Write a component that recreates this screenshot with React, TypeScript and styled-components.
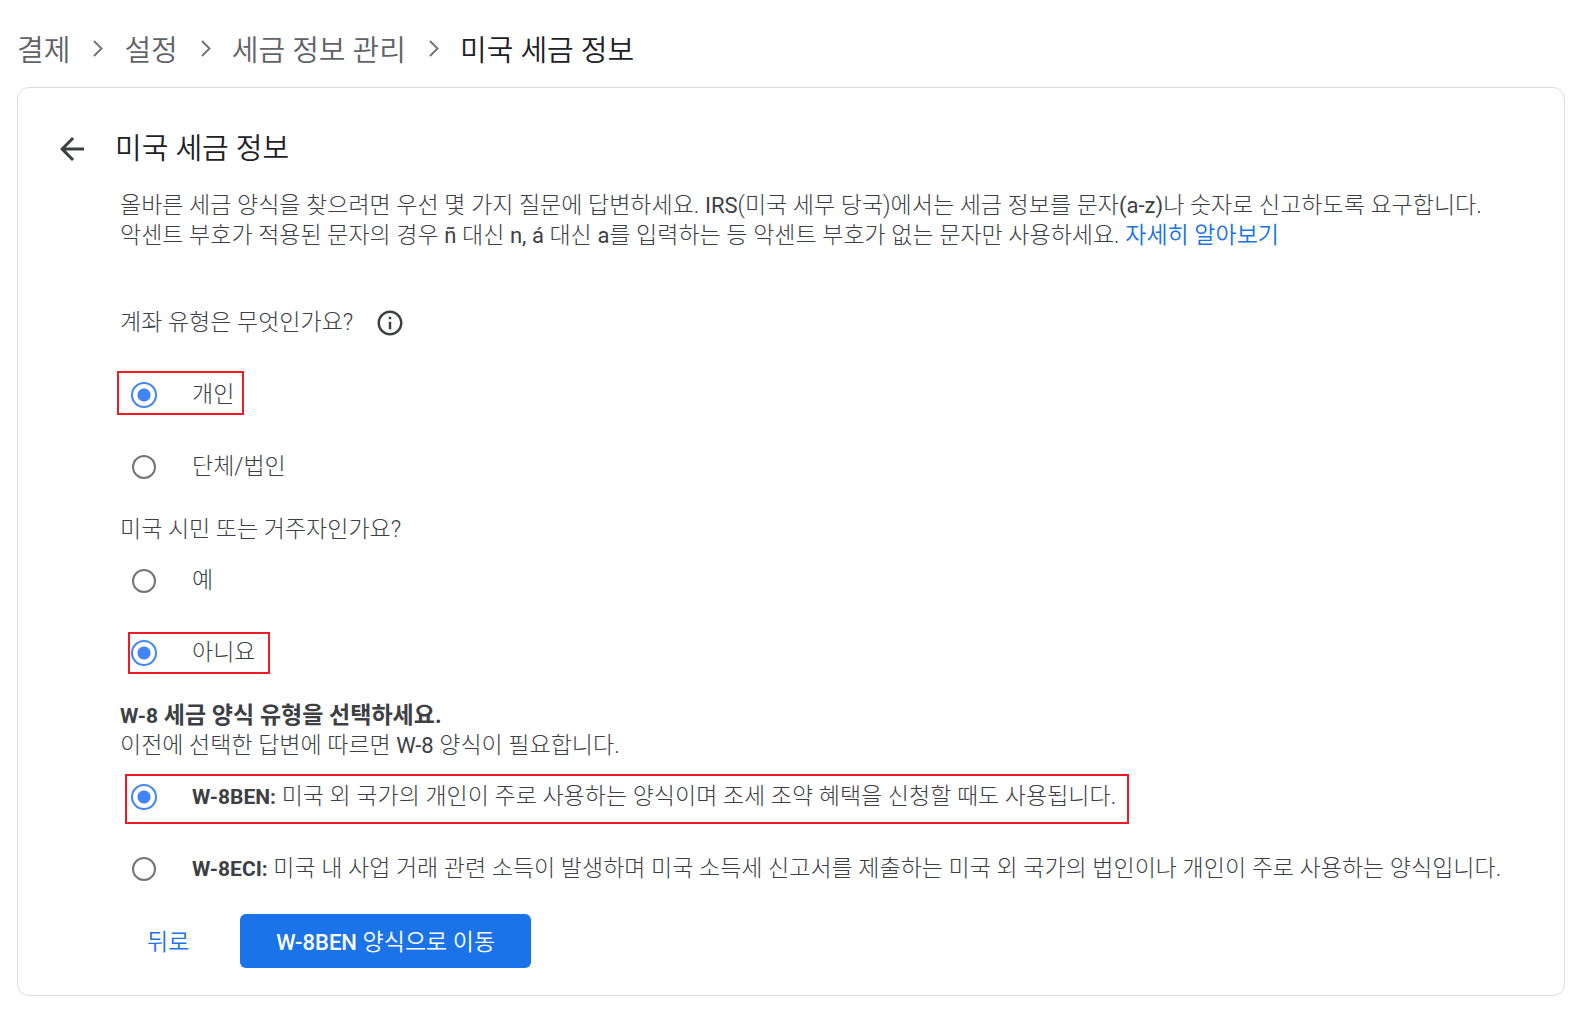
import React, { useState } from "react";
import styled, { createGlobalStyle, css } from "styled-components";

const fontStack = `Roboto, "Noto Sans CJK KR", sans-serif`;

const GlobalStyle = createGlobalStyle`
  *, *::before, *::after { box-sizing: border-box; }
  body {
    margin: 0;
    background: #fff;
    color: #3c4043;
    font-family: ${fontStack};
    font-size: 23px;
    line-height: 30px;
    font-weight: 300;
  }
`;

const Page = styled.div`
  padding: 29px 29px 29px 17px;
`;

const Breadcrumbs = styled.nav`
  display: flex;
  align-items: center;
  gap: 12px;
  height: 40px;
  margin-bottom: 18px;
  font-size: 29px;
  line-height: 40px;
  font-weight: 350;
  white-space: nowrap;
`;

const Crumb = styled.a`
  padding-top: 3px;
  color: #5f6368;
  text-decoration: none;
`;

const CurrentCrumb = styled.span`
  padding-top: 3px;
  color: #202124;
`;

const Card = styled.main`
  padding: 43px 52px 27px 36px;
  border: 1px solid #dadce0;
  border-radius: 12px;
`;

const CardHeader = styled.header`
  display: flex;
  align-items: center;
  gap: 25px;
  height: 36px;
`;

const IconButton = styled.button`
  display: inline-flex;
  padding: 0;
  border: 0;
  background: none;
  color: #3c4043;
  cursor: pointer;
`;

const Title = styled.h1`
  margin: 0;
  color: #202124;
  font-size: 29px;
  line-height: 36px;
  font-weight: 350;
`;

const Body = styled.form`
  padding: 24px 0 0 66px;
`;

const Intro = styled.p`
  margin: 0 0 57px;
  white-space: nowrap;
`;

const Link = styled.a`
  color: #1a73e8;
  font-weight: 350;
  text-decoration: none;
`;

const Group = styled.fieldset`
  min-width: 0;
  margin: 0 0 12px;
  padding: 0;
  border: 0;
`;

const Legend = styled.legend<{ $spaced?: boolean }>`
  display: flex;
  align-items: center;
  gap: 22px;
  padding: 0;
  margin-bottom: ${(p) => (p.$spaced ? 21 : 0)}px;
`;

const StackedLegend = styled.legend`
  padding: 0;
`;

const Strong = styled.strong`
  font-weight: 700;
`;

const FormCode = styled.strong`
  font-size: 21px;
  font-weight: 700;
`;

const Latin = styled.span`
  font-size: 22px;
  font-weight: 400;
`;

const ButtonCode = styled.span`
  font-size: 22px;
  font-weight: 500;
`;

const Option = styled.label`
  position: relative;
  display: flex;
  align-items: center;
  width: max-content;
  height: 72px;
  padding-left: 11px;
  gap: 35px;
  white-space: nowrap;
  cursor: pointer;
`;

const Radio = styled.input`
  appearance: none;
  flex: none;
  width: 24px;
  height: 24px;
  margin: 1px;
  border: 2px solid #757575;
  border-radius: 50%;
  cursor: pointer;

  &:checked {
    width: 26px;
    height: 26px;
    margin: 0;
    border-color: #4285f4;
    background: radial-gradient(circle, #4285f4 6px, transparent 7px);
  }
`;

type Inset = { top: number; right: number; bottom: number; left: number };

const Highlight = styled.span<{ $inset: Inset }>`
  position: absolute;
  border: 2px solid #ed1c24;
  pointer-events: none;
  ${({ $inset: i }) => css`
    inset: ${i.top}px ${i.right}px ${i.bottom}px ${i.left}px;
  `}
`;

const Actions = styled.div`
  display: flex;
  gap: 24px;
  margin-top: -3px;
`;

const Button = styled.button<{ $primary?: boolean }>`
  height: 54px;
  padding: 3px ${(p) => (p.$primary ? 36 : 27)}px 0;
  border: 0;
  border-radius: 6px;
  background: ${(p) => (p.$primary ? "#1a73e8" : "transparent")};
  color: ${(p) => (p.$primary ? "#fff" : "#1a73e8")};
  font: 350 23px / 30px ${fontStack};
  cursor: pointer;
`;

const ChevronIcon = () => (
  <svg width="30" height="30" viewBox="0 0 30 30" fill="none" stroke="#757575" strokeWidth="2" aria-hidden="true">
    <path d="M12 7l7.500 7.500L12 22" />
  </svg>
);

const BackIcon = () => (
  <svg width="36" height="36" viewBox="0 0 24 24" fill="currentColor" aria-hidden="true">
    <path d="M20 11H7.830l5.590-5.590L12 4l-8 8 8 8 1.410-1.410L7.830 13H20v-2z" />
  </svg>
);

const InfoIcon = () => (
  <svg width="30" height="30" viewBox="0 0 24 24" fill="currentColor" aria-hidden="true">
    <path d="M11 7h2v2h-2zm0 4h2v6h-2zm1-9C6.480 2 2 6.480 2 12s4.480 10 10 10 10-4.480 10-10S17.520 2 12 2zm0 18c-4.410 0-8-3.590-8-8s3.590-8 8-8 8 3.590 8 8-3.590 8-8 8z" />
  </svg>
);

type ChoiceProps = {
  name: string;
  value: string;
  selected: string;
  onSelect: (value: string) => void;
  highlight?: Inset;
  children: React.ReactNode;
};

const Choice = ({ name, value, selected, onSelect, highlight, children }: ChoiceProps) => (
  <Option>
    <Radio type="radio" name={name} value={value} checked={selected === value} onChange={() => onSelect(value)} />
    <span>{children}</span>
    {highlight && <Highlight $inset={highlight} />}
  </Option>
);

export default function App() {
  const [account, setAccount] = useState("individual");
  const [resident, setResident] = useState("no");
  const [taxForm, setTaxForm] = useState("w8ben");

  return (
    <>
      <GlobalStyle />
      <Page>
        <Breadcrumbs>
          <Crumb href="#payments">결제</Crumb>
          <ChevronIcon />
          <Crumb href="#settings">설정</Crumb>
          <ChevronIcon />
          <Crumb href="#tax">세금 정보 관리</Crumb>
          <ChevronIcon />
          <CurrentCrumb>미국 세금 정보</CurrentCrumb>
        </Breadcrumbs>
        <Card>
          <CardHeader>
            <IconButton type="button" aria-label="뒤로">
              <BackIcon />
            </IconButton>
            <Title>미국 세금 정보</Title>
          </CardHeader>
          <Body onSubmit={(e) => e.preventDefault()}>
            <Intro>
              올바른 세금 양식을 찾으려면 우선 몇 가지 질문에 답변하세요. <Latin>IRS</Latin>(미국 세무 당국)에서는 세금 정보를 문자<Latin>(a-z)</Latin>나 숫자로 신고하도록 요구합니다.
              <br />
              악센트 부호가 적용된 문자의 경우 <Latin>ñ</Latin> 대신 <Latin>n, á</Latin> 대신 <Latin>a</Latin>를 입력하는 등 악센트 부호가 없는 문자만 사용하세요.{" "}
              <Link href="#more">자세히 알아보기</Link>
            </Intro>

            <Group>
              <Legend $spaced>
                계좌 유형은 무엇인가요?
                <IconButton type="button" aria-label="정보">
                  <InfoIcon />
                </IconButton>
              </Legend>
              <Choice name="account" value="individual" selected={account} onSelect={setAccount}
                highlight={{ top: 12, right: -10, bottom: 16, left: -3 }}>
                개인
              </Choice>
              <Choice name="account" value="entity" selected={account} onSelect={setAccount}>
                단체/법인
              </Choice>
            </Group>

            <Group>
              <Legend>미국 시민 또는 거주자인가요?</Legend>
              <Choice name="resident" value="yes" selected={resident} onSelect={setResident}>
                예
              </Choice>
              <Choice name="resident" value="no" selected={resident} onSelect={setResident}
                highlight={{ top: 15, right: -15, bottom: 15, left: 8 }}>
                아니요
              </Choice>
            </Group>

            <Group>
              <StackedLegend>
                <Strong>
                  <FormCode>W-8</FormCode> 세금 양식 유형을 선택하세요.
                </Strong>
                <br />
                이전에 선택한 답변에 따르면 <Latin>W-8</Latin> 양식이 필요합니다.
              </StackedLegend>
              <Choice name="form" value="w8ben" selected={taxForm} onSelect={setTaxForm}
                highlight={{ top: 13, right: -13, bottom: 9, left: 5 }}>
                <FormCode>W-8BEN:</FormCode> 미국 외 국가의 개인이 주로 사용하는 양식이며 조세 조약 혜택을 신청할 때도 사용됩니다.
              </Choice>
              <Choice name="form" value="w8eci" selected={taxForm} onSelect={setTaxForm}>
                <FormCode>W-8ECI:</FormCode> 미국 내 사업 거래 관련 소득이 발생하며 미국 소득세 신고서를 제출하는 미국 외 국가의 법인이나 개인이 주로 사용하는 양식입니다.
              </Choice>
            </Group>

            <Actions>
              <Button type="button">뒤로</Button>
              <Button type="submit" $primary>
                <ButtonCode>W-8BEN</ButtonCode> 양식으로 이동
              </Button>
            </Actions>
          </Body>
        </Card>
      </Page>
    </>
  );
}
